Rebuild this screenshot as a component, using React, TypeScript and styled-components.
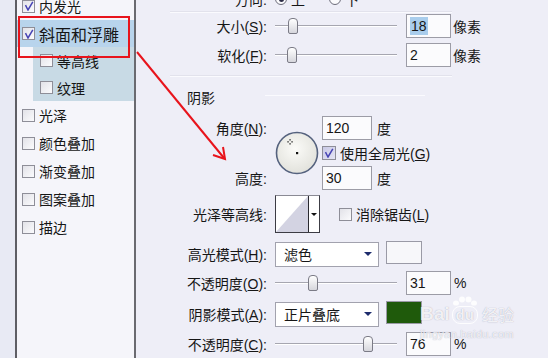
import React from 'react'
import styled, { createGlobalStyle } from 'styled-components'

const GlobalStyle = createGlobalStyle`
	html, body {
		margin: 0;
		padding: 0;
	}
	body {
		background: #eeeef7;
		font-family: "Liberation Sans", "Noto Sans CJK SC", sans-serif;
		font-size: 14px;
		color: #161616;
		overflow: hidden;
	}
`

const Window = styled.div`
	position: relative;
	display: flex;
	width: 548px;
	height: 358px;
	overflow: hidden;
	background: #eeeef7;
`

const Gutter = styled.div`
	flex: none;
	width: 15px;
	background: #e8eaf4;
	border-right: 2px solid #5e5e64;
`

const StyleList = styled.div`
	flex: none;
	width: 117px;
	background: #f5f5fa;
	border-right: 2px solid #6a6a70;
`

const Items = styled.ul`
	margin: -8px 0 0;
	padding: 0;
	list-style: none;
`

const Item = styled.li<{ $sub?: boolean; $active?: boolean }>`
	display: flex;
	align-items: center;
	gap: 4px;
	height: ${p => (p.$sub || p.$active ? 27 : 28)}px;
	margin-left: ${p => (p.$sub ? 16 : 0)}px;
	padding-left: ${p => (p.$sub ? 7 : 5)}px;
	background: ${p => (p.$active ? '#b8d4ec' : p.$sub ? '#c8dae5' : 'transparent')};
	font-size: ${p => (p.$active ? 16 : 14)}px;
	white-space: nowrap;
`

const Box = styled.span<{ $big?: boolean }>`
	box-sizing: border-box;
	flex: none;
	display: inline-flex;
	align-items: center;
	justify-content: center;
	width: ${p => (p.$big ? 14 : 13)}px;
	height: ${p => (p.$big ? 14 : 13)}px;
	border: 1px solid #8e8e98;
	background: ${p => (p.$big ? 'linear-gradient(135deg, #c9c9e6, #e4e4f4)' : 'linear-gradient(135deg, #e2e2e8, #fbfbfd)')};
`

const Check = ({ on, big }: { on?: boolean; big?: boolean }) => (
	<Box $big={big}>
		{on && (
			<svg width="10" height="10" viewBox="0 0 10 10">
				<path d="M1.5 4.2 L4 9 L8.8 0.8" fill="none" stroke="#4744b4" strokeWidth="1.5" />
			</svg>
		)}
	</Box>
)

const Settings = styled.div`
	flex: 1;
	display: flex;
	flex-direction: column;
	margin-top: -11px;
`

const Field = styled.div<{ $h: number; $mt?: number }>`
	display: flex;
	align-items: center;
	height: ${p => p.$h}px;
	margin-top: ${p => p.$mt ?? 0}px;
	white-space: nowrap;
`

const Label = styled.span`
	box-sizing: border-box;
	flex: none;
	width: 139px;
	padding-right: 8px;
	text-align: right;
`

const Divider = styled.div<{ $mt: number }>`
	height: 1px;
	margin: ${p => p.$mt}px 96px 0 34px;
	background: #fafafe;
	box-shadow: 0 -1px 0 #e2e2ec;
`

const Radio = styled.span<{ $on?: boolean }>`
	box-sizing: border-box;
	flex: none;
	display: inline-flex;
	align-items: center;
	justify-content: center;
	width: 12px;
	height: 12px;
	border: 1px solid #6c6c7a;
	border-radius: 50%;
	background: #fbfbfd;
	&::after {
		content: '';
		width: 5px;
		height: 5px;
		border-radius: 50%;
		background: ${p => (p.$on ? '#2b2b44' : 'transparent')};
	}
`

const Choice = styled.span<{ $gap?: number }>`
	margin-left: 4px;
	margin-right: ${p => p.$gap ?? 0}px;
`

const Slider = styled.div`
	position: relative;
	flex: none;
	width: 122px;
	height: 18px;
	&::before {
		content: '';
		position: absolute;
		left: 0;
		right: 0;
		top: 8px;
		border-top: 1px solid #a6a6b0;
		border-bottom: 1px solid #ffffff;
	}
`

const Thumb = styled.span<{ $at: number }>`
	position: absolute;
	top: 1px;
	left: ${p => p.$at - 5}px;
	box-sizing: border-box;
	width: 10px;
	height: 16px;
	border: 1px solid #7b7b86;
	border-radius: 4px 4px 2px 2px;
	background: linear-gradient(#ffffff, #d6d6dc);
`

const NumBox = styled.div<{ $w?: number; $gap?: number }>`
	box-sizing: border-box;
	flex: none;
	display: flex;
	align-items: center;
	width: ${p => p.$w ?? 45}px;
	height: 24px;
	margin-left: ${p => p.$gap ?? 9}px;
	padding-left: 3px;
	border: 1px solid #9c9ca6;
	background: #fbfbfd;
	font-family: "Liberation Sans", Arial, sans-serif;
	font-size: 14px;
`

const Selected = styled.span`
	background: #a9cdec;
	padding: 1px 1px;
`

const Unit = styled.span<{ $gap?: number }>`
	margin-left: ${p => p.$gap ?? 2}px;
`

const Section = styled.div`
	display: flex;
	align-items: center;
	height: 20px;
	margin-top: 10px;
	padding-left: 51px;
	&::after {
		content: '';
		height: 1px;
		width: 160px;
		margin-left: 50px;
		margin-top: -4px;
		background: #fafafe;
	}
`

const AngleBlock = styled.div`
	display: grid;
	grid-template-columns: 139px 47px auto;
	grid-template-rows: 25px 15px 25px;
	row-gap: 5px;
	align-items: center;
	margin-top: 8px;
	white-space: nowrap;
`

const DialCell = styled.div`
	grid-column: 2;
	grid-row: 1 / 4;
	display: flex;
	align-items: center;
`

const Cell = styled.div`
	display: flex;
	align-items: center;
	grid-column: 3;
`

const Contour = styled.div`
	box-sizing: border-box;
	flex: none;
	display: flex;
	width: 45px;
	height: 38px;
	border: 1px solid #3c3c44;
	border-top-color: #8a8a94;
	background: #ffffff;
`

const ContourArrow = styled.span`
	flex: 1;
	display: flex;
	align-items: center;
	justify-content: center;
	border-left: 1px solid #2a2a30;
	&::after {
		content: '';
		border-left: 3px solid transparent;
		border-right: 3px solid transparent;
		border-top: 3px solid #111;
	}
`

const CheckLabel = styled.span<{ $gap?: number }>`
	display: inline-flex;
	align-items: center;
	gap: 4px;
	margin-left: ${p => p.$gap ?? 0}px;
`

const Select = styled.div`
	box-sizing: border-box;
	flex: none;
	display: flex;
	align-items: center;
	justify-content: space-between;
	width: 104px;
	height: 25px;
	padding: 0 6px 0 8px;
	border: 1px solid #a2a2ae;
	background: #ffffff;
	&::after {
		content: '';
		border-left: 4px solid transparent;
		border-right: 4px solid transparent;
		border-top: 4px solid #1d2b6c;
	}
`

const Swatch = styled.span<{ $color: string }>`
	box-sizing: border-box;
	flex: none;
	align-self: flex-start;
	width: 36px;
	height: 23px;
	margin-left: 7px;
	border: 1px solid #9a9aa6;
	background: ${p => p.$color};
`

const Overlay = styled.svg`
	position: absolute;
	left: 0;
	top: 0;
	pointer-events: none;
`

const Watermark = styled.div`
	position: absolute;
	left: 420px;
	top: 296px;
	pointer-events: none;
	color: rgba(255, 255, 255, 0.85);
	text-shadow: 0 0 1px rgba(140, 140, 165, 0.8);
`

const Brand = styled.div`
	display: flex;
	align-items: flex-end;
	gap: 2px;
	font-family: "Liberation Sans", Arial, sans-serif;
	font-weight: bold;
	font-size: 19px;
	line-height: 20px;
`

const Paw = styled.span`
	display: flex;
	flex-direction: column;
	align-items: center;
`

const PawPad = styled.span`
	padding: 0 3px;
	border-radius: 8px;
	border: 1px solid rgba(255, 255, 255, 0.85);
	font-size: 15px;
	line-height: 16px;
`

const BrandCn = styled.span`
	font-family: "Noto Sans CJK SC", sans-serif;
	font-size: 16px;
	font-weight: normal;
	margin-left: 2px;
`

const Url = styled.div`
	margin-top: 4px;
	font-family: "Liberation Sans", Arial, sans-serif;
	font-size: 11px;
	letter-spacing: 0.3px;
`

const Dial = () => (
	<svg width="44" height="44" viewBox="0 0 44 44">
		<defs>
			<radialGradient id="dialFill" cx="45%" cy="40%" r="60%">
				<stop offset="0%" stopColor="#fbfbf8" />
				<stop offset="100%" stopColor="#e2e2dc" />
			</radialGradient>
		</defs>
		<circle cx="22" cy="22" r="20.5" fill="url(#dialFill)" stroke="#55627e" strokeWidth="1.6" />
		<rect x="21" y="21" width="2.2" height="2.2" fill="#111" />
		<rect x="14.4" y="8.2" width="1.3" height="1.3" fill="#222" />
		<rect x="14.4" y="12.2" width="1.3" height="1.3" fill="#222" />
		<rect x="12.4" y="10.2" width="1.3" height="1.3" fill="#222" />
		<rect x="16.4" y="10.2" width="1.3" height="1.3" fill="#222" />
	</svg>
)

export default function App() {
	return (
		<>
			<GlobalStyle />
			<Window>
				<Gutter />
				<StyleList>
					<Items>
						<Item>
							<Check on />
							内发光
						</Item>
						<Item $active>
							<Check on />
							斜面和浮雕
						</Item>
						<Item $sub>
							<Check />
							等高线
						</Item>
						<Item $sub>
							<Check />
							纹理
						</Item>
						<Item>
							<Check />
							光泽
						</Item>
						<Item>
							<Check />
							颜色叠加
						</Item>
						<Item>
							<Check />
							渐变叠加
						</Item>
						<Item>
							<Check />
							图案叠加
						</Item>
						<Item>
							<Check />
							描边
						</Item>
					</Items>
				</StyleList>

				<Settings>
					<Field $h={20}>
						<Label>方向:</Label>
						<Radio $on />
						<Choice $gap={24}>上</Choice>
						<Radio />
						<Choice>下</Choice>
					</Field>
					<Divider $mt={3} />
					<Field $h={25}>
						<Label>
							大小(<u>S</u>):
						</Label>
						<Slider>
							<Thumb $at={18} />
						</Slider>
						<NumBox>
							<Selected>18</Selected>
						</NumBox>
						<Unit>像素</Unit>
					</Field>
					<Field $h={25} $mt={4}>
						<Label>
							软化(<u>F</u>):
						</Label>
						<Slider>
							<Thumb $at={17} />
						</Slider>
						<NumBox>2</NumBox>
						<Unit>像素</Unit>
					</Field>
					<Divider $mt={9} />

					<Section>阴影</Section>
					<AngleBlock>
						<Label style={{ gridRow: 1 }}>
							角度(<u>N</u>):
						</Label>
						<DialCell>
							<Dial />
						</DialCell>
						<Cell style={{ gridRow: 1 }}>
							<NumBox $w={50} $gap={0}>
								120
							</NumBox>
							<Unit $gap={5}>度</Unit>
						</Cell>
						<Cell style={{ gridRow: 2 }}>
							<CheckLabel>
								<Check on big />
								<span>
									使用全局光(<u>G</u>)
								</span>
							</CheckLabel>
						</Cell>
						<Label style={{ gridRow: 3 }}>高度:</Label>
						<Cell style={{ gridRow: 3 }}>
							<NumBox $w={50} $gap={0}>
								30
							</NumBox>
							<Unit $gap={5}>度</Unit>
						</Cell>
					</AngleBlock>

					<Field $h={38} $mt={5}>
						<Label>光泽等高线:</Label>
						<Contour>
							<svg width="32" height="36" viewBox="0 0 32 36">
								<polygon points="0,36 32,0 32,36" fill="#d3d3e2" />
							</svg>
							<ContourArrow />
						</Contour>
						<CheckLabel $gap={19}>
							<Check />
							<span>
								消除锯齿(<u>L</u>)
							</span>
						</CheckLabel>
					</Field>
					<Field $h={26} $mt={8}>
						<Label>
							高光模式(<u>H</u>):
						</Label>
						<Select>滤色</Select>
						<Swatch $color="#f7f7fa" />
					</Field>
					<Field $h={24} $mt={4}>
						<Label>
							不透明度(<u>O</u>):
						</Label>
						<Slider>
							<Thumb $at={38} />
						</Slider>
						<NumBox>31</NumBox>
						<Unit $gap={3}>%</Unit>
					</Field>
					<Field $h={26} $mt={6}>
						<Label>
							阴影模式(<u>A</u>):
						</Label>
						<Select>正片叠底</Select>
						<Swatch $color="#1f5a0b" />
					</Field>
					<Field $h={25} $mt={4}>
						<Label>
							不透明度(<u>C</u>):
						</Label>
						<Slider>
							<Thumb $at={93} />
						</Slider>
						<NumBox>76</NumBox>
						<Unit $gap={3}>%</Unit>
					</Field>
				</Settings>

				<Watermark>
					<Brand>
						<span>Bai</span>
						<Paw>
							<svg width="26" height="10" viewBox="0 0 26 10">
								<ellipse cx="4" cy="7" rx="3" ry="2.6" fill="rgba(255,255,255,0.85)" />
								<ellipse cx="10" cy="3.5" rx="3" ry="3" fill="rgba(255,255,255,0.85)" />
								<ellipse cx="16.5" cy="3.5" rx="3" ry="3" fill="rgba(255,255,255,0.85)" />
								<ellipse cx="22" cy="7" rx="3" ry="2.6" fill="rgba(255,255,255,0.85)" />
							</svg>
							<PawPad>du</PawPad>
						</Paw>
						<BrandCn>经验</BrandCn>
					</Brand>
					<Url>jingyan.baidu.com</Url>
				</Watermark>

				<Overlay width="548" height="358" viewBox="0 0 548 358">
					<rect x="19" y="17" width="110" height="40" fill="none" stroke="#e8141c" strokeWidth="2" />
					<line x1="137" y1="52" x2="224" y2="158" stroke="#e8141c" strokeWidth="2" />
					<polyline points="213,155 225,159 223,147" fill="none" stroke="#e8141c" strokeWidth="2" />
				</Overlay>
			</Window>
		</>
	)
}
